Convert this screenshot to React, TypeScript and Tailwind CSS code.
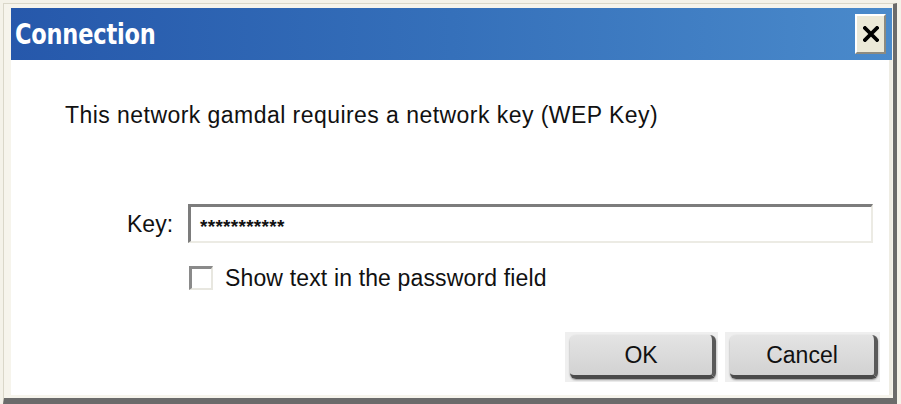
import React from "react";

export default function App() {
  return (
    <div className="w-[901px] h-[404px] bg-[#f4f2e9] pl-[3px] pt-[3px] pr-[4px] font-['Liberation_Sans',Arial,sans-serif]">
      <div className="h-full flex flex-col border-l border-t border-[#dad7c9] border-r-[4px] border-b-[6px] border-r-[#6b6b6b] border-b-[#6b6b6b] bg-[#f6f4ec] pl-[7px] pt-[4px] pr-[1px] pb-[3px]">
        {/* Title bar */}
        <div className="h-[52px] shrink-0 flex items-center justify-between bg-gradient-to-r from-[#2658ab] via-[#3570ba] to-[#4a8acb] pl-[4px] pr-[6px]">
          <span className="text-white font-bold text-[25px] leading-none font-['DejaVu_Sans_Condensed','DejaVu_Sans',sans-serif] tracking-[-0.2px] scale-y-[1.15]">
            Connection
          </span>
          <div className="w-[31px] h-[40px] bg-[#ece9d8] border-t-2 border-l-2 border-t-white border-l-white border-b-2 border-r-2 border-b-[#8c8a80] border-r-[#8c8a80] flex items-center justify-center">
            <svg width="16" height="16" viewBox="0 0 16 16">
              <path d="M2 2 L14 14 M14 2 L2 14" stroke="#000" strokeWidth="3.8" strokeLinecap="square" />
            </svg>
          </div>
        </div>
        {/* Content */}
        <div className="flex-1 bg-white border-r-[3px] border-[#efede4] flex flex-col text-[#111]">
          <div className="mt-[42px] pl-[54px] text-[23px] leading-[26px] tracking-[0.45px]">
            This network gamdal requires a network key (WEP Key)
          </div>
          <div className="mt-[76px] flex items-center pl-[116px] h-[39px]">
            <span className="w-[61px] text-[23px] leading-[26px]">Key:</span>
            <div className="w-[685px] h-[39px] bg-white border-t-[3px] border-l-[3px] border-t-[#7c7c7c] border-l-[#7c7c7c] border-b-2 border-r-2 border-b-[#ecebe4] border-r-[#ecebe4] flex items-center pl-[9px]">
              <span className="text-[19px] font-bold leading-none pt-[4px] tracking-[0.3px]">***********</span>
            </div>
          </div>
          <div className="mt-[23px] flex items-center pl-[178px] h-[24px]">
            <div className="w-[24px] h-[24px] bg-white border-t-[3px] border-l-[3px] border-t-[#8a8a8a] border-l-[#8a8a8a] border-b-2 border-r-2 border-b-[#e8e7e0] border-r-[#e8e7e0]" />
            <span className="ml-[12px] text-[23px] leading-[26px] tracking-[0.15px]">Show text in the password field</span>
          </div>
          <div className="mt-[42px] flex justify-end gap-[7px] pr-[9px]">
            {["OK", "Cancel"].map((t) => (
              <div key={t} className={`h-[50px] bg-[#efefef] pl-[5px] pr-[2px] pt-[3px] pb-[3px] ${t === "OK" ? "w-[153px]" : "w-[155px]"}`}>
                <div className="h-full rounded-[6px] bg-gradient-to-b from-[#e4e4e4] to-[#d2d2d2] border-b-[4px] border-r-[4px] border-b-[#4a4a4a] border-r-[#5a5a5a] shadow-[0_1px_2px_rgba(0,0,0,0.4)] flex items-center justify-center text-[23px] leading-none">
                  {t}
                </div>
              </div>
            ))}
          </div>
        </div>
      </div>
    </div>
  );
}
